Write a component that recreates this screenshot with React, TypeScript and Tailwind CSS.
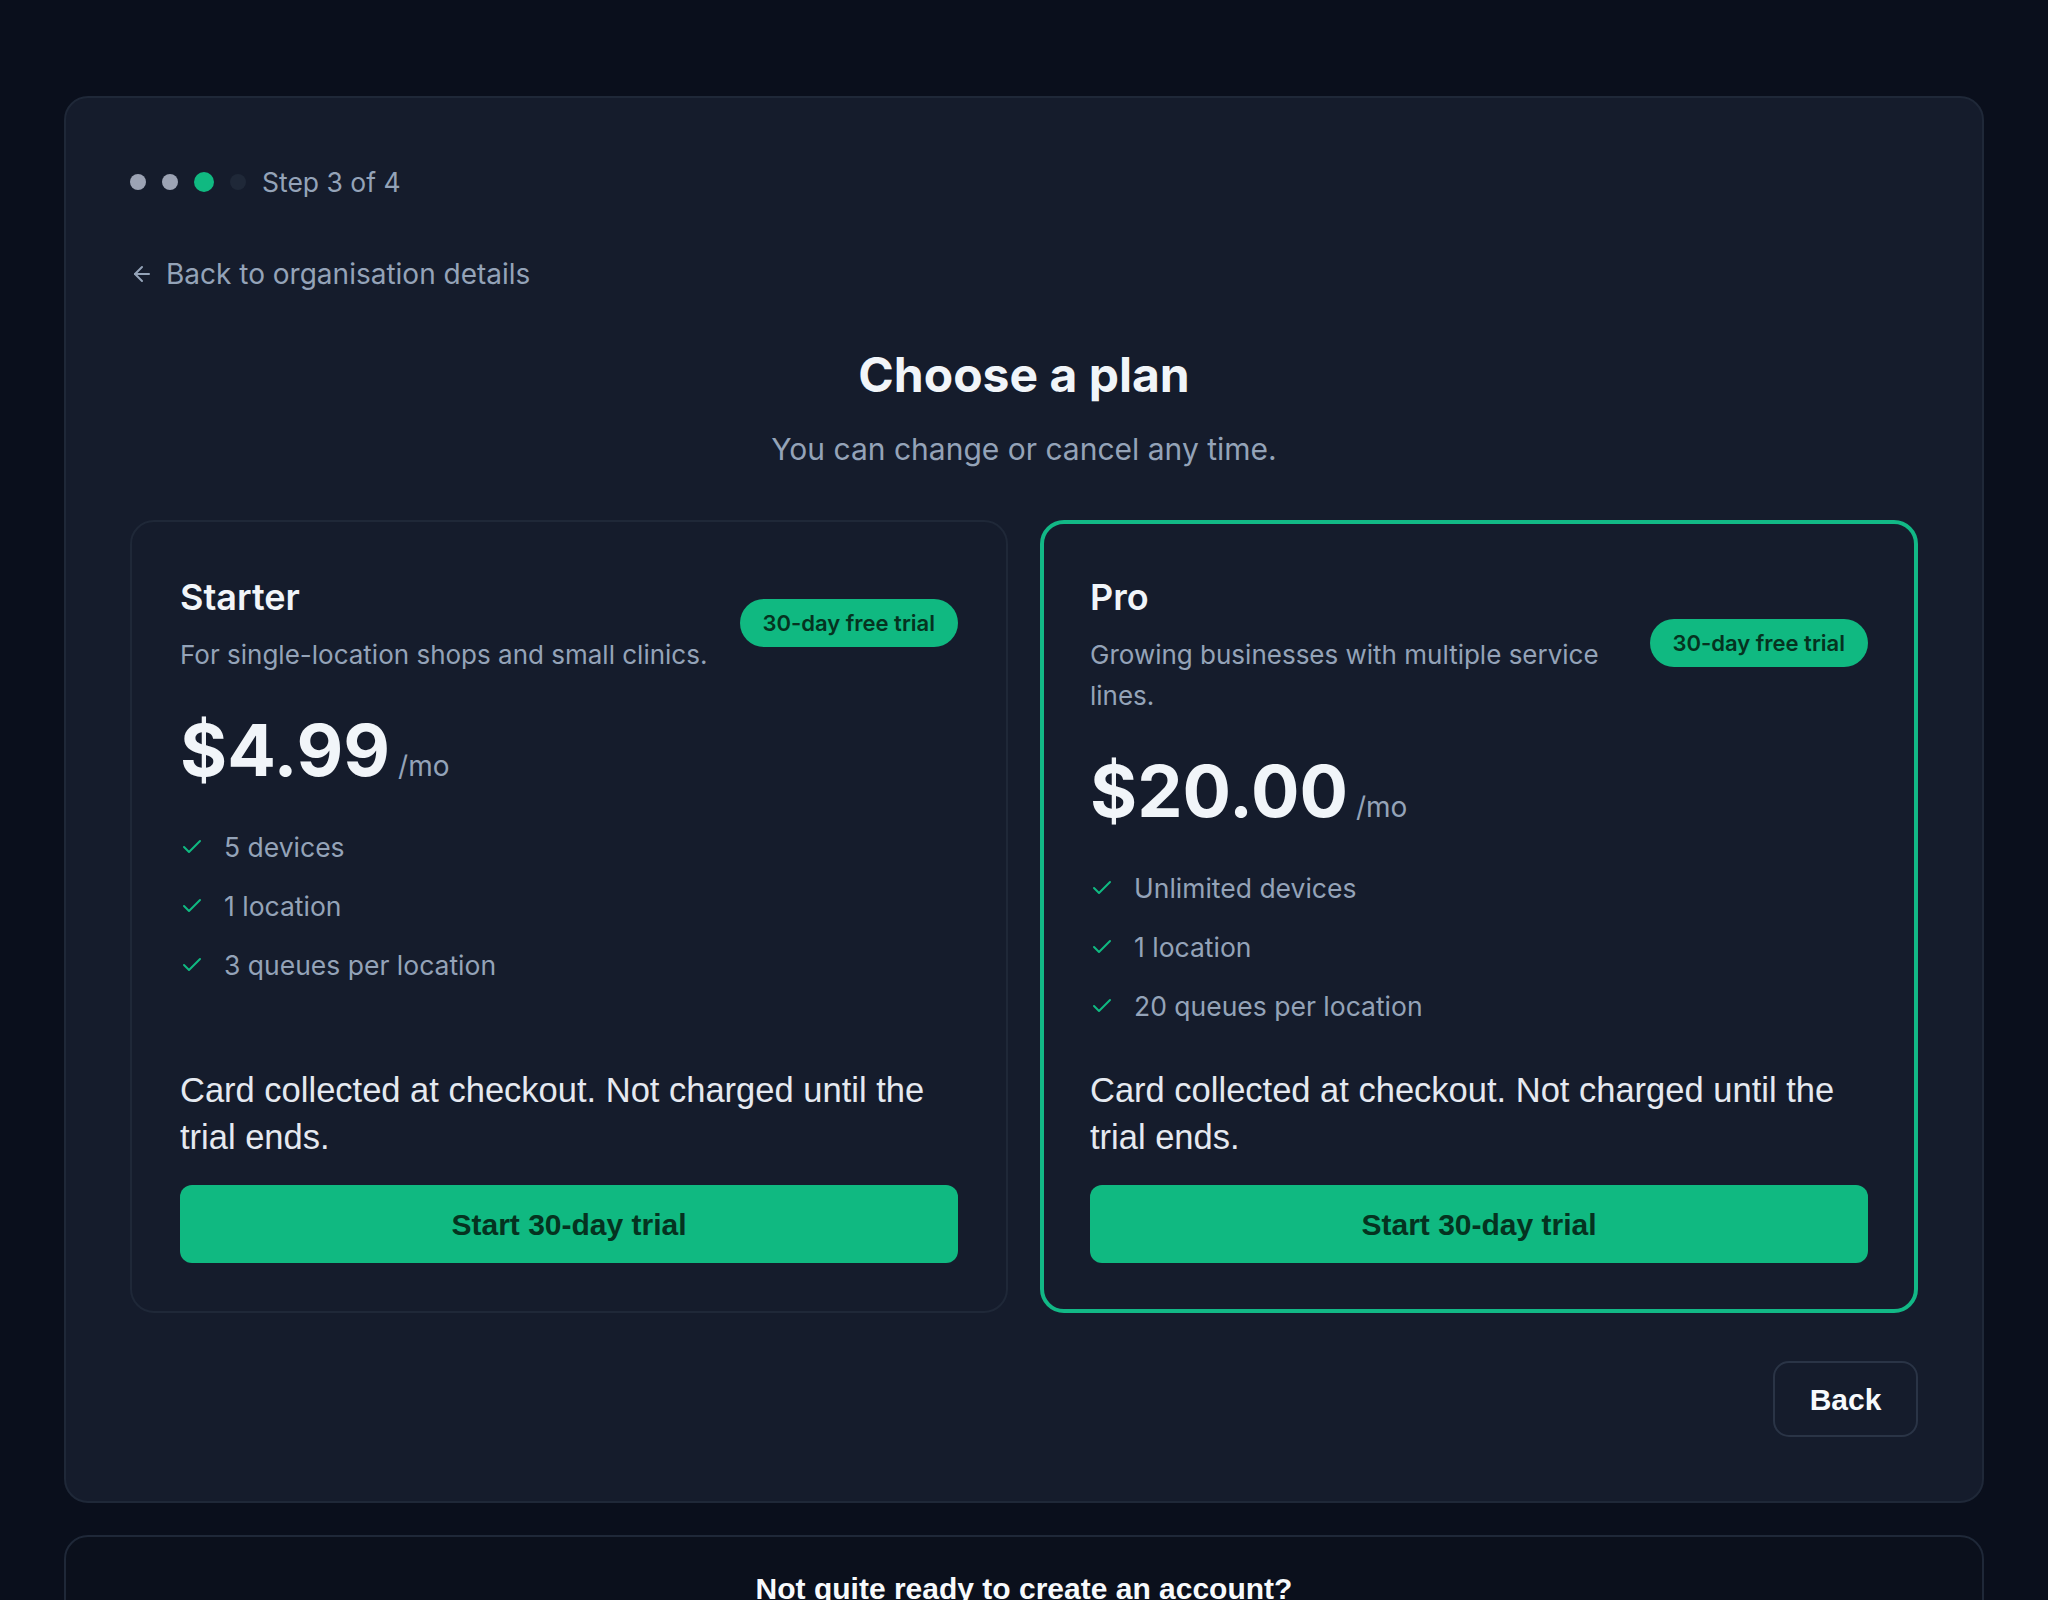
import { ArrowLeft, Check } from 'lucide-react'

interface Plan {
  id: string
  name: string
  description: string
  price: string
  features: string[]
  highlighted: boolean
}

const plans: Plan[] = [
  {
    id: 'starter',
    name: 'Starter',
    description: 'For single-location shops and small clinics.',
    price: '$4.99',
    features: ['5 devices', '1 location', '3 queues per location'],
    highlighted: false,
  },
  {
    id: 'pro',
    name: 'Pro',
    description: 'Growing businesses with multiple service lines.',
    price: '$20.00',
    features: ['Unlimited devices', '1 location', '20 queues per location'],
    highlighted: true,
  },
]

function PlanCard({ plan }: { plan: Plan }) {
  return (
    <div
      className={
        plan.highlighted
          ? 'flex flex-col rounded-3xl border-4 border-[#12b886] bg-[#151c2c] p-[46px]'
          : 'flex flex-col rounded-3xl border-2 border-[#1f2838] bg-[#151c2c] p-12'
      }
    >
      <div className="flex items-center justify-between gap-6">
        <div className="min-w-0">
          <h3 className="text-[36px] font-semibold leading-[54px] text-[#f1f5f9]">{plan.name}</h3>
          <p className="mt-[10px] text-[26px] leading-[41px] text-[#94a3b8]">{plan.description}</p>
        </div>
        <span className="shrink-0 whitespace-nowrap rounded-full bg-[#10b981] px-[23px] py-[10px] text-[22px] font-semibold leading-[28px] text-[#053320]">
          30-day free trial
        </span>
      </div>

      <div className="mt-[39px] flex items-baseline gap-2">
        <span className="text-[72px] font-bold leading-[72px] text-[#f1f5f9]">{plan.price}</span>
        <span className="text-[28px] text-[#94a3b8]">/mo</span>
      </div>

      <ul className="mt-10 flex flex-col gap-[19px]">
        {plan.features.map((f) => (
          <li key={f} className="flex items-center gap-5 text-[26.5px] leading-[40px] text-[#94a3b8]">
            <Check size={24} strokeWidth={2} className="shrink-0 text-[#10b981]" />
            {f}
          </li>
        ))}
      </ul>

      <p className="mt-auto pt-[41px] font-['Liberation_Sans',Arial,sans-serif] text-[34.5px] leading-[47px] text-[#e5e9f0]">
        Card collected at checkout. Not charged until the trial ends.
      </p>
      <button
        type="button"
        className="mt-6 h-[78px] w-full rounded-xl bg-[#10b981] font-['Liberation_Sans',Arial,sans-serif] text-[30px] font-bold text-[#053320]"
      >
        Start 30-day trial
      </button>
    </div>
  )
}

export default function App() {
  return (
    <div className="min-h-screen bg-[#0a0f1c] px-16 pt-24 pb-16 font-['Inter',sans-serif]">
      <div className="rounded-3xl border-2 border-[#1f2838] bg-[#151c2c] p-16">
        <div className="flex h-10 items-center gap-4">
          <span className="h-4 w-4 rounded-full bg-[#9ca3b4]" />
          <span className="h-4 w-4 rounded-full bg-[#9ca3b4]" />
          <span className="h-5 w-5 rounded-full bg-[#10b981]" />
          <span className="h-4 w-4 rounded-full bg-[#1f2838]" />
          <span className="text-[26.5px] leading-10 text-[#94a3b8]">Step 3 of 4</span>
        </div>

        <a href="#" className="mt-[52px] flex w-fit items-center gap-3 text-[28px] leading-10 text-[#94a3b8]">
          <ArrowLeft size={24} strokeWidth={2} />
          Back to organisation details
        </a>

        <h1 className="mt-[53px] text-center text-[48px] font-bold leading-[56px] text-[#f1f5f9]">
          Choose a plan
        </h1>
        <p className="mt-[26px] text-center text-[30px] leading-10 text-[#94a3b8]">
          You can change or cancel any time.
        </p>

        <div className="mt-[51px] grid grid-cols-2 gap-8">
          {plans.map((p) => (
            <PlanCard key={p.id} plan={p} />
          ))}
        </div>

        <div className="mt-12 flex justify-end">
          <button
            type="button"
            className="h-[76px] w-[145px] rounded-2xl border-2 border-[#2a3446] font-['Liberation_Sans',Arial,sans-serif] text-[30px] font-bold text-[#f8fafc]"
          >
            Back
          </button>
        </div>
      </div>

      <div className="mt-8 rounded-3xl border-2 border-[#1f2838] bg-[#0b101c] px-16 pt-8 pb-16 text-center">
        <h2 className="font-['Liberation_Sans',Arial,sans-serif] text-[30px] font-bold leading-10 text-[#f8fafc]">
          Not quite ready to create an account?
        </h2>
        <p className="mt-4 text-[24px] leading-9 text-[#94a3b8]">
          Try the live demo first — no sign-up required.
        </p>
      </div>
    </div>
  )
}
